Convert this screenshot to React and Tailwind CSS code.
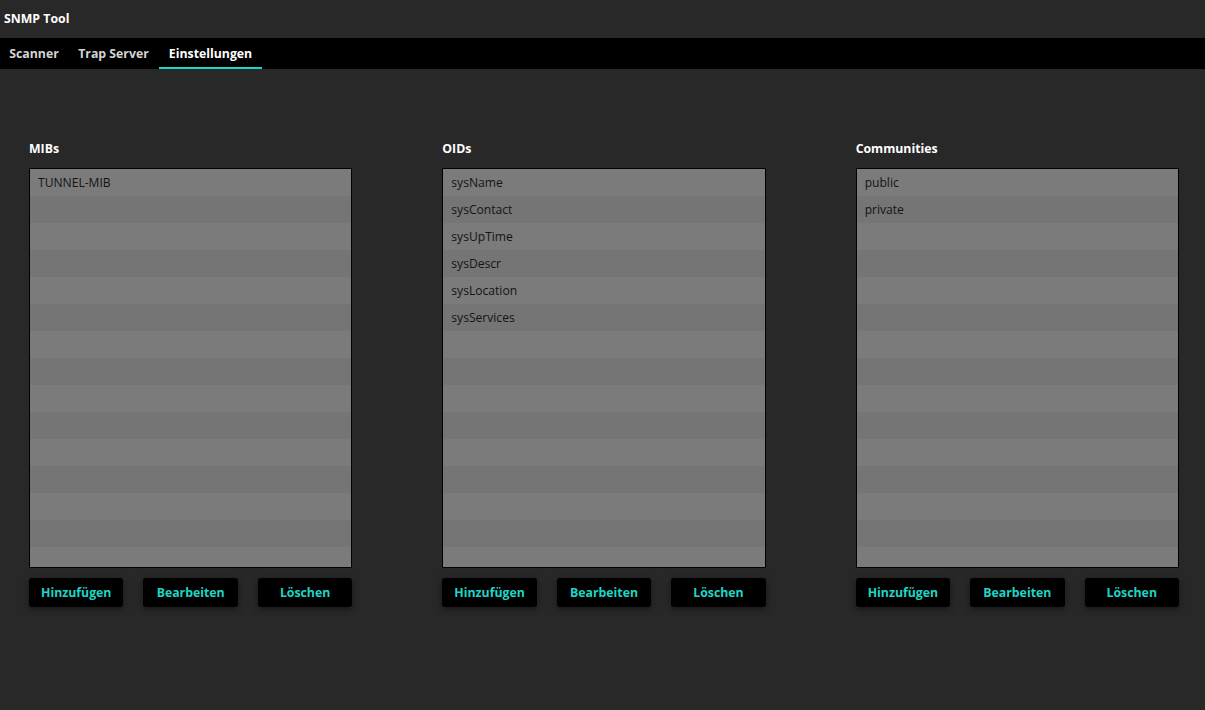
import React from "react";

const lists = [
  { title: "MIBs", items: ["TUNNEL-MIB"] },
  {
    title: "OIDs",
    items: ["sysName", "sysContact", "sysUpTime", "sysDescr", "sysLocation", "sysServices"],
  },
  { title: "Communities", items: ["public", "private"] },
];

function ListPanel({ title, items }) {
  const rows = Array.from({ length: 15 }, (_, i) => items[i] || "");
  return (
    <div className="flex flex-col">
      <div className="h-[18px] pt-[1px] text-[12.3px] font-bold leading-[18px] text-white">{title}</div>
      <div className="mt-[11px] h-[400px] overflow-hidden border border-black bg-[#7a7a7a]">
        {rows.map((item, i) => (
          <div
            key={i}
            className={`h-[27px] px-[8px] text-[12.1px] leading-[27px] text-[#141414] ${
              i % 2 === 0 ? "bg-[#7b7b7b]" : "bg-[#757575]"
            }`}
          >
            {item}
          </div>
        ))}
      </div>
      <div className="mt-[10px] grid grid-cols-3 gap-[20px]">
        {["Hinzufügen", "Bearbeiten", "Löschen"].map((b) => (
          <button
            key={b}
            className="h-[29px] rounded-[3px] bg-black pt-[1px] text-[12.3px] font-bold text-[#1fd5c6] shadow-[0_2px_6px_rgba(0,0,0,0.45)]"
          >
            {b}
          </button>
        ))}
      </div>
    </div>
  );
}

export default function App() {
  return (
    <div
      className="flex h-[710px] w-[1205px] flex-col bg-[#282828]"
      style={{ fontFamily: '"Open Sans", "Noto Sans", sans-serif' }}
    >
      {/* Title bar */}
      <div className="flex h-[38px] items-center px-[4px] text-[12.3px] font-bold text-white">
        SNMP Tool
      </div>

      {/* Tabs */}
      <div className="flex h-[31px] bg-black text-[12.3px] font-bold">
        <div className="flex h-full w-[68px] items-center justify-center pt-[2px] text-[#d4d4d4]">Scanner</div>
        <div className="flex h-full w-[91px] items-center justify-center pt-[2px] text-[#d4d4d4]">Trap Server</div>
        <div className="flex h-full w-[103px] items-center justify-center border-b-[2px] border-[#1fd5c6] pt-[3px] text-white">
          Einstellungen
        </div>
      </div>

      {/* Content */}
      <div className="grid grid-cols-3 gap-[90px] pl-[29px] pr-[26px] pt-[70px]">
        {lists.map((l) => (
          <ListPanel key={l.title} title={l.title} items={l.items} />
        ))}
      </div>
    </div>
  );
}
